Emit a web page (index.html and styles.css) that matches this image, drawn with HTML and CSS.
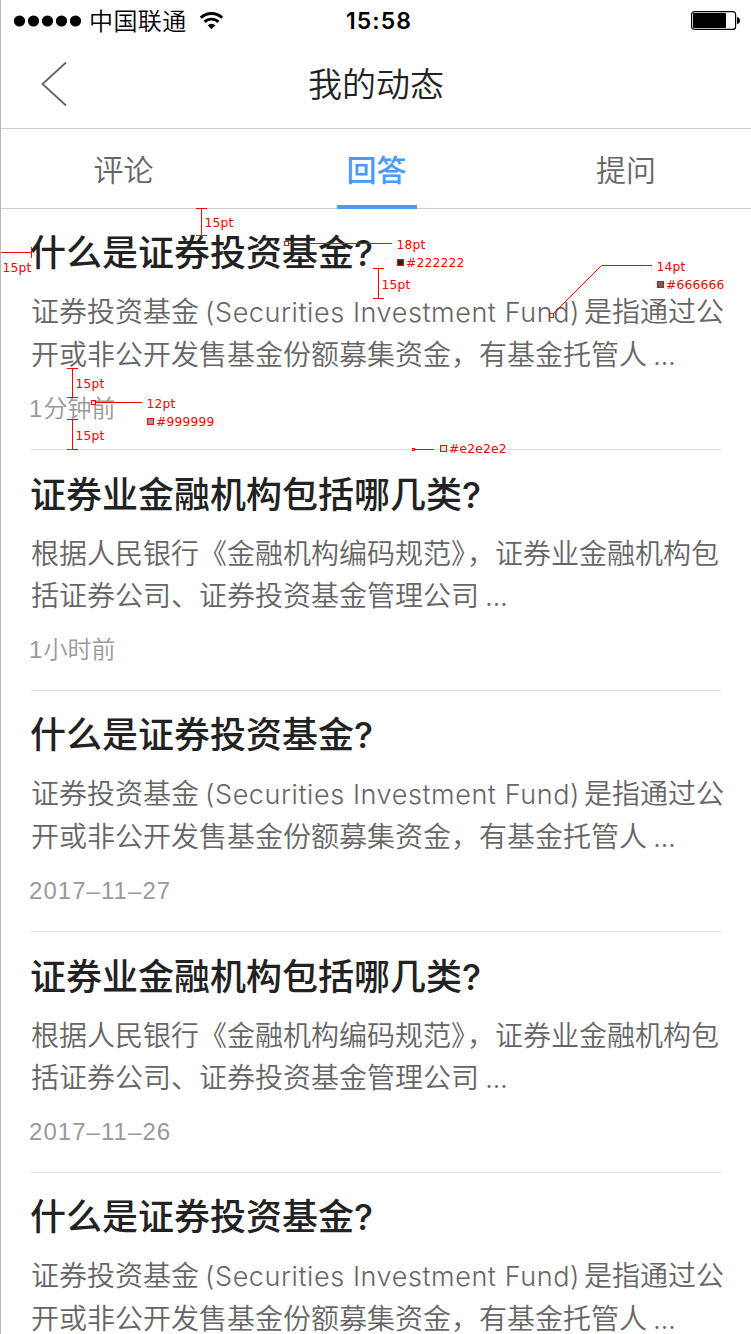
FILE: index.html
```html
<!DOCTYPE html>
<html lang="zh-CN">
<head>
<meta charset="utf-8">
<title>我的动态</title>
<link rel="stylesheet" href="styles.css">
</head>
<body>
<div class="screen">
  <div class="status">
    <div class="carrier">
      <svg class="signal" width="68" height="12" viewBox="0 0 68 12"><circle cx="5.5" cy="6" r="5.6"/><circle cx="19.5" cy="6" r="5.6"/><circle cx="33.5" cy="6" r="5.6"/><circle cx="47.5" cy="6" r="5.6"/><circle cx="61.5" cy="6" r="5.6"/></svg>
      <span class="carrier-name">中国联通</span>
      <svg class="wifi" width="26" height="20" viewBox="0 0 26 20"><g fill="none" stroke="#000" stroke-width="2.9"><path d="M1.800 6.700 A15.600 15.600 0 0 1 23.200 6.700"/><path d="M5.600 10.900 A10 10 0 0 1 19.400 10.900"/></g><path d="M8.600 14.300 A6.200 6.200 0 0 1 16.400 14.300 L12.500 18.300 Z"/></svg>
    </div>
    <div class="clock">15:58</div>
    <svg class="battery" width="50" height="20" viewBox="0 0 50 20"><rect x=".6" y=".6" width="44" height="17.8" rx="3" fill="none" stroke="#000" stroke-width="1.2"/><rect x="2" y="2" width="33" height="15" rx="1"/><path d="M46 6 Q49 6.500 49 9.500 Q49 12.500 46 13 Z"/></svg>
  </div>
  <header class="nav">
    <svg class="back" width="28" height="46" viewBox="0 0 28 46"><path d="M25 1.500 L1.500 23 L25 44.500" fill="none" stroke="#666" stroke-width="1.8"/></svg>
    <h1 class="nav-title">我的动态</h1>
  </header>
  <nav class="tabs">
    <div class="tab tab-first"><span>评论</span></div>
    <div class="tab tab-active"><span>回答</span></div>
    <div class="tab"><span>提问</span></div>
  </nav>
  <main class="list">
    <article class="item">
      <h2 class="question">什么是证券投资基金<span class="qmark">?</span></h2>
      <p class="answer">证券投资基金<span class="latin">(Securities Investment Fund)</span>是指通过公<br>开或非公开发售基金份额募集资金，有基金托管人<span class="dots">...</span></p>
      <div class="time"><span class="num">1</span>分钟前</div>
    </article>
    <article class="item">
      <h2 class="question">证券业金融机构包括哪几类<span class="qmark">?</span></h2>
      <p class="answer">根据人民银行《金融机构编码规范<span class="tight">》</span>，证券业金融机构包<br>括证券公司、证券投资基金管理公司<span class="dots">...</span></p>
      <div class="time"><span class="num">1</span>小时前</div>
    </article>
    <article class="item">
      <h2 class="question">什么是证券投资基金<span class="qmark">?</span></h2>
      <p class="answer">证券投资基金<span class="latin">(Securities Investment Fund)</span>是指通过公<br>开或非公开发售基金份额募集资金，有基金托管人<span class="dots">...</span></p>
      <div class="time"><span class="num">2017–11–27</span></div>
    </article>
    <article class="item">
      <h2 class="question">证券业金融机构包括哪几类<span class="qmark">?</span></h2>
      <p class="answer">根据人民银行《金融机构编码规范<span class="tight">》</span>，证券业金融机构包<br>括证券公司、证券投资基金管理公司<span class="dots">...</span></p>
      <div class="time"><span class="num">2017–11–26</span></div>
    </article>
    <article class="item">
      <h2 class="question">什么是证券投资基金<span class="qmark">?</span></h2>
      <p class="answer">证券投资基金<span class="latin">(Securities Investment Fund)</span>是指通过公<br>开或非公开发售基金份额募集资金，有基金托管人<span class="dots">...</span></p>
    </article>
  </main>
  <svg class="specs" width="751" height="470" viewBox="0 0 751 470">
    <g class="rule">
      <path d="M196 208.500H207M201.500 208V236M196 235.500H207"/>
      <path d="M.5 247V258M0 252.500H32M31.500 247V258"/>
      <path d="M373 268.500H384M378.500 268V299M373 298.500H384"/>
      <path d="M67 368.500H78M72.500 368V398M67 397.500H78"/>
      <path d="M67 419.500H78M72.500 419V450M67 449.500H78"/>
      <path d="M289 243.500H392M96 402.500H142M415 449.500H434M601.500 265.500H652"/>
      <rect x="284.500" y="241.500" width="4" height="4"/>
      <rect x="91.500" y="400.500" width="4" height="4"/>
      <rect x="412.500" y="448.500" width="2" height="2"/>
      <rect x="549.500" y="313.500" width="4" height="4"/>
      <rect x="397.500" y="259.500" width="6" height="6" fill="#222"/>
      <rect x="657.500" y="281.500" width="6" height="6" fill="#666"/>
      <rect x="147.500" y="418.500" width="6" height="6" fill="#999"/>
      <rect x="440.500" y="445.500" width="6" height="6" fill="#e2e2e2"/>
    </g>
    <path class="leader" d="M553.500 313.500L601.500 265.500"/>
    <g class="label">
      <text x="204.500" y="227">15pt</text><text x="2.500" y="272">15pt</text><text x="381.500" y="289">15pt</text>
      <text x="396.500" y="249">18pt</text><text x="406" y="267">#222222</text>
      <text x="656.500" y="271">14pt</text><text x="666" y="289">#666666</text>
      <text x="75.500" y="388">15pt</text><text x="75.500" y="440">15pt</text>
      <text x="146.500" y="408">12pt</text><text x="156" y="426">#999999</text>
      <text x="449" y="453">#e2e2e2</text>
    </g>
  </svg>
</div>
</body>
</html>
```
FILE: styles.css
```css
* { box-sizing: border-box; margin: 0; padding: 0; }
body { background: #fff; overflow: hidden; }
.screen {
  position: relative;
  width: 751px;
  height: 1334px;
  overflow: hidden;
  border-left: 1px solid #b9b9b9;
  background: #fff;
  font-family: Inter, "Noto Sans CJK SC", sans-serif;
  color: #222;
  white-space: nowrap;
  text-spacing-trim: space-all;
}
.status {
  display: grid;
  grid-template-columns: 1fr auto 1fr;
  align-items: center;
  height: 40px;
  padding: 0 10px 0 13px;
  color: #000;
}
.carrier { display: flex; align-items: center; }
.carrier-name { margin: -2px 0 0 7px; font: 350 24px/40px "Noto Sans CJK SC", sans-serif; letter-spacing: .4px; }
.wifi { margin-left: 12px; }
.clock { padding-left: 3px; font-weight: 600; font-size: 23px; line-height: 42px; letter-spacing: 1.1px; }
.battery { justify-self: end; }
.nav {
  display: grid;
  grid-template-columns: 120px 1fr 120px;
  align-items: center;
  height: 89px;
  border-bottom: 1px solid #ccc;
}
.back { margin-left: 40px; }
.nav-title { padding-top: 2px; text-align: center; font-size: 34px; font-weight: 350; line-height: 86px; }
.tabs {
  display: grid;
  grid-template-columns: repeat(3, 1fr);
  height: 80px;
  border-bottom: 1px solid #ccc;
}
.tab { display: flex; justify-content: center; font-size: 30px; line-height: 82px; color: #666; font-weight: 350; }
.tab span { width: 80px; height: 80px; text-align: center; }
.tab-first { padding-right: 5px; }
.tab-active { padding-left: 1px; color: #489aff; font-weight: 500; }
.tab-active span { border-bottom: 4px solid #489aff; }
.list { padding: 0 30px; }
.item { height: 241px; padding-top: 19px; border-bottom: 1px solid #e2e2e2; }
.item:nth-child(even) { padding-top: 20px; }
.question { margin-left: -1px; font-size: 36px; line-height: 50px; font-weight: 500; }
.qmark { font-weight: 500; }
.answer { margin-top: 13px; font-size: 28px; line-height: 42px; font-weight: 350; color: #666; }
.latin { display: inline-block; width: 385px; padding-left: 6px; font-size: 27px; font-weight: 350; letter-spacing: .58px; }
.dots { margin-left: 6px; letter-spacing: -.4px; }
.tight { letter-spacing: -12px; }
.time { margin: 17px 0 0 -2px; font-size: 24px; line-height: 32px; font-weight: 350; color: #999; }
.time .num { display: inline-block; min-width: 14px; font-family: "Liberation Sans", sans-serif; font-size: 24px; line-height: 32px; letter-spacing: 1.05px; }
.specs { position: absolute; left: -1px; top: 0; }
.rule { fill: none; stroke: #f00; stroke-width: 1; shape-rendering: crispEdges; }
.leader { fill: none; stroke: #f00; stroke-width: 1; }
.label { fill: #f00; font-family: "DejaVu Sans", sans-serif; font-size: 12.300px; letter-spacing: .2px; }
```
